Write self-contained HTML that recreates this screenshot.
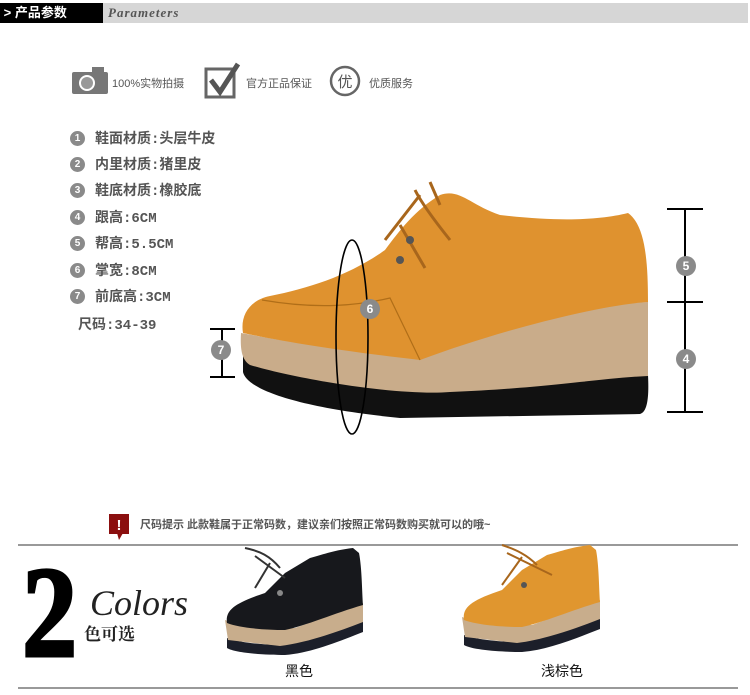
<!DOCTYPE html>
<html><head><meta charset="utf-8"><style>
body{margin:0;width:750px;height:695px;background:#fff;position:relative;overflow:hidden;font-family:"Liberation Sans","Noto Sans CJK SC",sans-serif}
.a{position:absolute;white-space:nowrap}
.sp{color:#555;font-size:14px;font-weight:bold;font-family:"Liberation Mono","Noto Sans CJK SC",monospace}
.n{position:absolute;left:70px;width:15px;height:15px;border-radius:50%;background:#8a8a8a;color:#fff;font-size:10px;font-weight:bold;text-align:center;line-height:15px}
</style></head><body>
<div class="a" style="left:0;top:3px;width:748px;height:20px;background:#d6d6d6"></div>
<div class="a" style="left:0;top:3px;width:103px;height:20px;background:#000;color:#fff;font-size:13px;line-height:20px;font-weight:bold">&nbsp;&gt; 产品参数</div>
<div class="a" style="left:108px;top:3px;line-height:20px;font-family:'Liberation Serif',serif;font-style:italic;font-weight:bold;font-size:13px;color:#555;letter-spacing:1px">Parameters</div>

<svg class="a" style="left:0;top:0" width="750" height="695">
<rect x="72" y="72" width="36" height="22" rx="2" fill="#777"/><rect x="92" y="67" width="12" height="6" fill="#777"/>
<circle cx="87" cy="83" r="8" fill="#fff"/><circle cx="87" cy="83" r="6" fill="#999"/>
<rect x="206" y="69" width="28" height="28" fill="none" stroke="#666" stroke-width="3"/>
<path d="M211 80 L220 92 L238 64" fill="none" stroke="#555" stroke-width="5"/>
<circle cx="345" cy="81" r="14" fill="none" stroke="#666" stroke-width="2.5"/>
<text x="345" y="87" font-size="15" text-anchor="middle" fill="#555" font-family="Noto Sans CJK SC">优</text>

<path d="M243 372 C247 390 300 408 400 418 L640 414 C648 412 649 395 648 375 L648 355 L243 355Z" fill="#111"/>
<path d="M241 333 C240 350 242 360 250 365 C300 380 400 396 450 392 C550 388 600 378 648 376 L648 302 C600 303 500 330 420 358 C350 352 290 342 241 333Z" fill="#c9ac8a"/>
<path d="M243 333 C240 315 250 300 270 296 C310 288 350 275 385 250 C400 230 415 210 440 195 C460 188 470 205 500 215 C560 222 600 220 628 213 C645 225 648 260 648 302 C600 305 500 330 420 360 C350 352 290 343 243 333Z" fill="#df922f"/>
<path d="M262 300 C320 310 360 305 390 298 L420 360" fill="none" stroke="#b06e18" stroke-width="1.2"/>
<path d="M415 190 C420 200 430 215 450 240 M420 195 L385 240 M430 182 L440 205 M400 225 L425 268" stroke="#a8661c" stroke-width="3" fill="none"/>
<circle cx="400" cy="260" r="4" fill="#555"/><circle cx="410" cy="240" r="4" fill="#555"/>
<g stroke="#000" stroke-width="2" fill="none">
<path d="M685 209 V412 M667 209 H703 M667 302 H703 M667 412 H703"/>
<path d="M222 329 V377 M210 329 H235 M210 377 H235"/>
<ellipse cx="352" cy="337" rx="16" ry="97" stroke-width="1.6"/>
</g>
<g fill="#8a8a8a"><circle cx="686" cy="266" r="10"/><circle cx="686" cy="359" r="10"/><circle cx="221" cy="350" r="10"/><circle cx="370" cy="309" r="10"/></g>
<g fill="#fff" font-size="12" font-weight="bold" text-anchor="middle" font-family="Liberation Sans"><text x="686" y="270">5</text><text x="686" y="363">4</text><text x="221" y="354">7</text><text x="370" y="313">6</text></g>

<rect x="109" y="514" width="20" height="20" fill="#8b0f0f"/><path d="M117 533 L119 540 L123 533Z" fill="#8b0f0f"/>
<text x="119" y="530" font-size="15" font-weight="bold" fill="#fff" text-anchor="middle">!</text>
<line x1="18" y1="545" x2="738" y2="545" stroke="#999" stroke-width="2"/>
<line x1="18" y1="688" x2="738" y2="688" stroke="#999" stroke-width="2"/>

<g transform="translate(225,548)">
<path d="M2 90 C20 96 45 97 60 97 L138 72 L138 84 C110 95 85 105 60 107 C40 107 10 105 2 100Z" fill="#1c1f2a"/>
<path d="M0 72 C20 80 50 80 70 80 L138 55 L138 74 C110 85 80 95 55 98 L3 92 Z" fill="#c8ad8c"/>
<path d="M2 75 C0 62 10 55 40 45 L60 25 L85 10 C100 6 110 2 128 0 L134 5 C137 20 137 45 138 57 C110 65 80 78 60 82 C40 82 15 80 2 75Z" fill="#17181c"/>
<path d="M20 0 C35 3 45 8 55 20 M30 8 L60 30 M45 15 L30 40" stroke="#333" stroke-width="2" fill="none"/>
<circle cx="55" cy="45" r="3" fill="#888"/>
</g>
<g transform="translate(462,545)">
<path d="M2 90 C20 96 45 97 60 97 L138 72 L138 84 C110 95 85 105 60 107 C40 107 10 105 2 100Z" fill="#1c1f2a"/>
<path d="M0 72 C20 80 50 80 70 80 L138 55 L138 74 C110 85 80 95 55 98 L3 92 Z" fill="#c8ad8c"/>
<path d="M2 75 C0 62 10 55 40 45 L60 25 L85 10 C100 6 110 2 128 0 L134 5 C137 20 137 45 138 57 C110 65 80 78 60 82 C40 82 15 80 2 75Z" fill="#e0962f"/>
<path d="M40 0 C55 5 65 10 75 20 M45 8 L90 30 M60 12 L40 40" stroke="#a8661c" stroke-width="2" fill="none"/>
<circle cx="62" cy="40" r="3" fill="#555"/>
</g>
</svg>

<div class="a" style="left:112px;top:75px;font-size:11px;color:#555">100%实物拍摄</div>
<div class="a" style="left:246px;top:75px;font-size:11px;color:#555">官方正品保证</div>
<div class="a" style="left:369px;top:75px;font-size:11px;color:#555">优质服务</div>

<div class="n" style="top:131px">1</div><div class="a sp" style="left:95px;top:128px">鞋面材质:头层牛皮</div>
<div class="n" style="top:157px">2</div><div class="a sp" style="left:95px;top:154px">内里材质:猪里皮</div>
<div class="n" style="top:183px">3</div><div class="a sp" style="left:95px;top:180px">鞋底材质:橡胶底</div>
<div class="n" style="top:210px">4</div><div class="a sp" style="left:95px;top:207px">跟高:6CM</div>
<div class="n" style="top:236px">5</div><div class="a sp" style="left:95px;top:233px">帮高:5.5CM</div>
<div class="n" style="top:263px">6</div><div class="a sp" style="left:95px;top:260px">掌宽:8CM</div>
<div class="n" style="top:289px">7</div><div class="a sp" style="left:95px;top:286px">前底高:3CM</div>
<div class="a sp" style="left:78px;top:314px">尺码:34-39</div>

<div class="a" style="left:140px;top:516px;font-size:11px;color:#555;font-weight:bold">尺码提示 此款鞋属于正常码数，建议亲们按照正常码数购买就可以的哦~</div>

<div class="a" style="left:22px;top:548px;font-family:'Liberation Serif',serif;font-weight:bold;font-size:130px;line-height:130px;color:#000;transform:scaleX(0.85);transform-origin:left;-webkit-text-stroke:3px #000">2</div>
<div class="a" style="left:90px;top:582px;font-family:'Liberation Serif',serif;font-style:italic;font-size:36px;color:#222">Colors</div>
<div class="a" style="left:84px;top:620px;font-family:'Noto Serif CJK SC',serif;font-size:17px;font-weight:bold;color:#222">色可选</div>
<div class="a" style="left:285px;top:661px;font-size:14px;color:#111">黑色</div>
<div class="a" style="left:541px;top:661px;font-size:14px;color:#111">浅棕色</div>
</body></html>
